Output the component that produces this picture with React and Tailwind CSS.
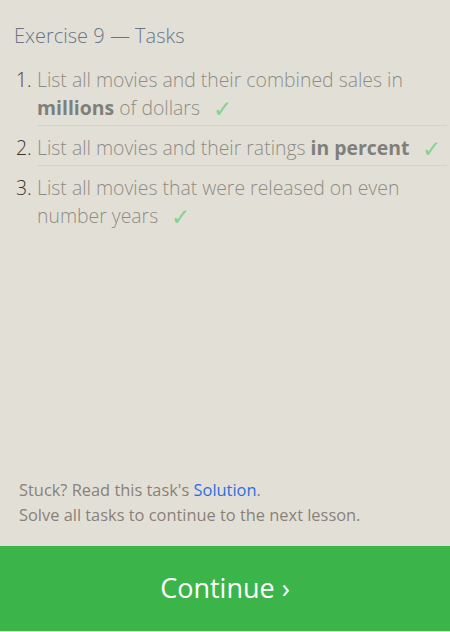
export default function App() {
  const tasks = [
    {
      num: "text-[#6b2e1e]",
      body: (
        <>
          List all movies and their combined sales in <b className="font-bold text-[#7f7f7b]">millions</b> of dollars
        </>
      ),
    },
    {
      num: "text-[#333]",
      body: (
        <>
          List all movies and their ratings <b className="font-bold text-[#7f7f7b]">in percent</b>
        </>
      ),
    },
    {
      num: "text-[#333]",
      body: <>List all movies that were released on even number years</>,
    },
  ];

  return (
    <div className="h-[632px] w-[450px] overflow-hidden bg-[#e2e0d6] flex flex-col font-['Open_Sans',sans-serif]">
      <div className="flex-1 pt-[21px] pl-[14px] pr-[3px]">
        <h1 className="text-[20px] leading-[30px] text-[#6b7587] font-light">Exercise 9 — Tasks</h1>
        <ol className="mt-[15px]">
          {tasks.map((t, i) => (
            <li key={i} className="flex">
              <span className={`w-[23px] shrink-0 pl-[2px] text-[19.4px] leading-[28px] font-light ${t.num}`}>{i + 1}.</span>
              <div
                className={`flex-1 text-[19.4px] leading-[28px] font-light text-[#8e8c86] pb-[3px] mb-[8px] ${
                  i < tasks.length - 1 ? "border-b border-[#d6d4ca]" : ""
                }`}
              >
                {t.body}
                <span className="ml-[13px] inline-block align-[-2px] text-[23px] leading-none font-['DejaVu_Sans',sans-serif] font-light text-[#85d08f]">
                  ✓
                </span>
              </div>
            </li>
          ))}
        </ol>
      </div>
      <div className="px-[19px] pb-[19px] text-[16.4px] leading-[25px] text-[#8a807a]">
        <p>
          Stuck? Read this task's <span className="text-[#2a6ee0]">Solution</span>.
        </p>
        <p>Solve all tasks to continue to the next lesson.</p>
      </div>
      <button className="h-[85px] w-full bg-[#3bb54a] text-white text-[27px] flex items-center justify-center mb-[1px]">
        Continue ›
      </button>
    </div>
  );
}
